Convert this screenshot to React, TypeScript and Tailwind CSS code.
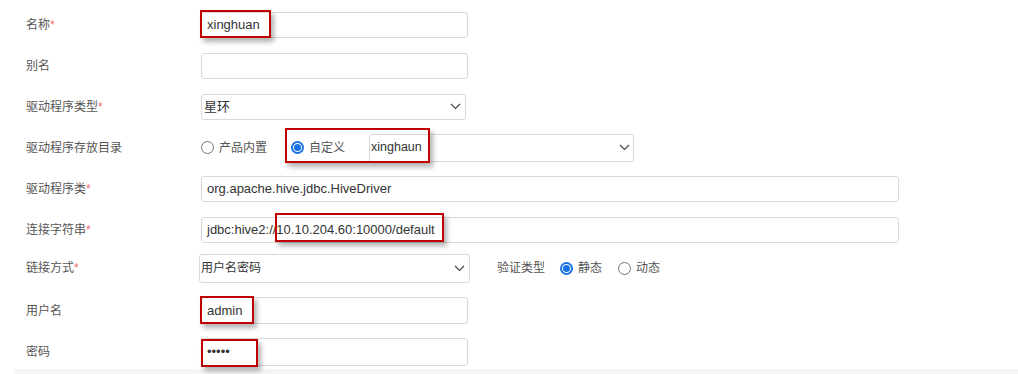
import React from 'react';

const font = { fontFamily: '"Liberation Sans", "Noto Sans CJK SC", sans-serif' };

function Label({ text, required }: { text: string; required?: boolean }) {
  return (
    <div className="w-[175px] shrink-0 text-[12px] text-[#555]">
      {text}
      {required && <span className="text-[#f56c6c]">*</span>}
    </div>
  );
}

function Chevron() {
  return (
    <svg width="11" height="7" viewBox="0 0 11 7" className="text-[#444]">
      <path d="M1 1l4.5 4.5L10 1" fill="none" stroke="currentColor" strokeWidth="1.2" />
    </svg>
  );
}

function Radio({ checked }: { checked?: boolean }) {
  return checked ? (
    <span className="flex h-[13px] w-[13px] items-center justify-center rounded-full border-2 border-[#1a73e8] bg-white">
      <span className="h-[7px] w-[7px] rounded-full bg-[#1a73e8]" />
    </span>
  ) : (
    <span className="h-[13px] w-[13px] rounded-full border border-[#767676] bg-white" />
  );
}

function Mark({ className }: { className: string }) {
  return (
    <div
      className={`pointer-events-none absolute border-2 border-[#c00000] shadow-[3px_4px_5px_rgba(0,0,0,0.3)] ${className}`}
    />
  );
}

export default function App() {
  const box = 'flex h-[26px] items-center rounded-[3px] border border-[#d9d9d9] bg-white';
  return (
    <div className="relative h-[374px] w-[1018px] overflow-hidden bg-white pt-[4px]" style={font}>
      <div className="pl-[26px]">
        <div className="flex h-[41px] items-center">
          <Label text="名称" required />
          <div className={`${box} w-[267px] pl-[5px] text-[13px] text-[#333]`}>xinghuan</div>
        </div>
        <div className="flex h-[41px] items-center">
          <Label text="别名" />
          <div className={`${box} w-[267px]`} />
        </div>
        <div className="flex h-[41px] items-center">
          <Label text="驱动程序类型" required />
          <div className={`${box} w-[265px] justify-between pl-[2px] pr-[4px] text-[13px] text-[#333]`}>
            <span>星环</span>
            <Chevron />
          </div>
        </div>
        <div className="flex h-[41px] items-center">
          <Label text="驱动程序存放目录" />
          <div className="flex items-center gap-[5px] text-[12px] text-[#555]">
            <Radio />
            <span>产品内置</span>
          </div>
          <div className="ml-[24px] flex items-center gap-[5px] text-[12px] text-[#555]">
            <Radio checked />
            <span>自定义</span>
          </div>
          <div className={`${box} ml-[24px] h-[28px] w-[265px] justify-between pl-[1px] pr-[3px] text-[12.5px] text-[#333]`}>
            <span>xinghaun</span>
            <Chevron />
          </div>
        </div>
        <div className="flex h-[41px] items-center">
          <Label text="驱动程序类" required />
          <div className={`${box} w-[698px] pl-[5px] text-[13px] text-[#333]`}>org.apache.hive.jdbc.HiveDriver</div>
        </div>
        <div className="flex h-[41px] items-center">
          <Label text="连接字符串" required />
          <div className={`${box} w-[698px] pl-[5px] text-[13px] text-[#333]`}>
            jdbc:hive2://10.10.204.60:10000/default
          </div>
        </div>
        <div className="flex h-[36px] items-center">
          <Label text="链接方式" required />
          <div className={`${box} -ml-[2px] h-[29px] w-[271px] justify-between pl-[1px] pr-[4px] text-[12px] text-[#333]`}>
            <span>用户名密码</span>
            <Chevron />
          </div>
          <span className="ml-[27px] text-[12px] text-[#555]">验证类型</span>
          <div className="ml-[15px] flex items-center gap-[5px] text-[12px] text-[#555]">
            <Radio checked />
            <span>静态</span>
          </div>
          <div className="ml-[16px] flex items-center gap-[5px] text-[12px] text-[#555]">
            <Radio />
            <span>动态</span>
          </div>
        </div>
        <div className="flex h-[49px] items-center">
          <Label text="用户名" />
          <div className={`${box} h-[27px] w-[267px] pl-[5px] text-[13px] text-[#333]`}>admin</div>
        </div>
        <div className="flex h-[34px] items-center">
          <Label text="密码" />
          <div className={`${box} h-[28px] w-[267px] pl-[5px] text-[13px] text-[#333]`}>•••••</div>
        </div>
      </div>
      <div className="ml-[14px] h-[5px] bg-[#f5f5f5]" />

      <Mark className="left-[200px] top-[10px] h-[28px] w-[71px]" />
      <Mark className="left-[285px] top-[128px] h-[35px] w-[145px]" />
      <Mark className="left-[275px] top-[213px] h-[29px] w-[169px]" />
      <Mark className="left-[200px] top-[296px] h-[28px] w-[54px]" />
      <Mark className="left-[201px] top-[339px] h-[28px] w-[57px]" />
    </div>
  );
}
